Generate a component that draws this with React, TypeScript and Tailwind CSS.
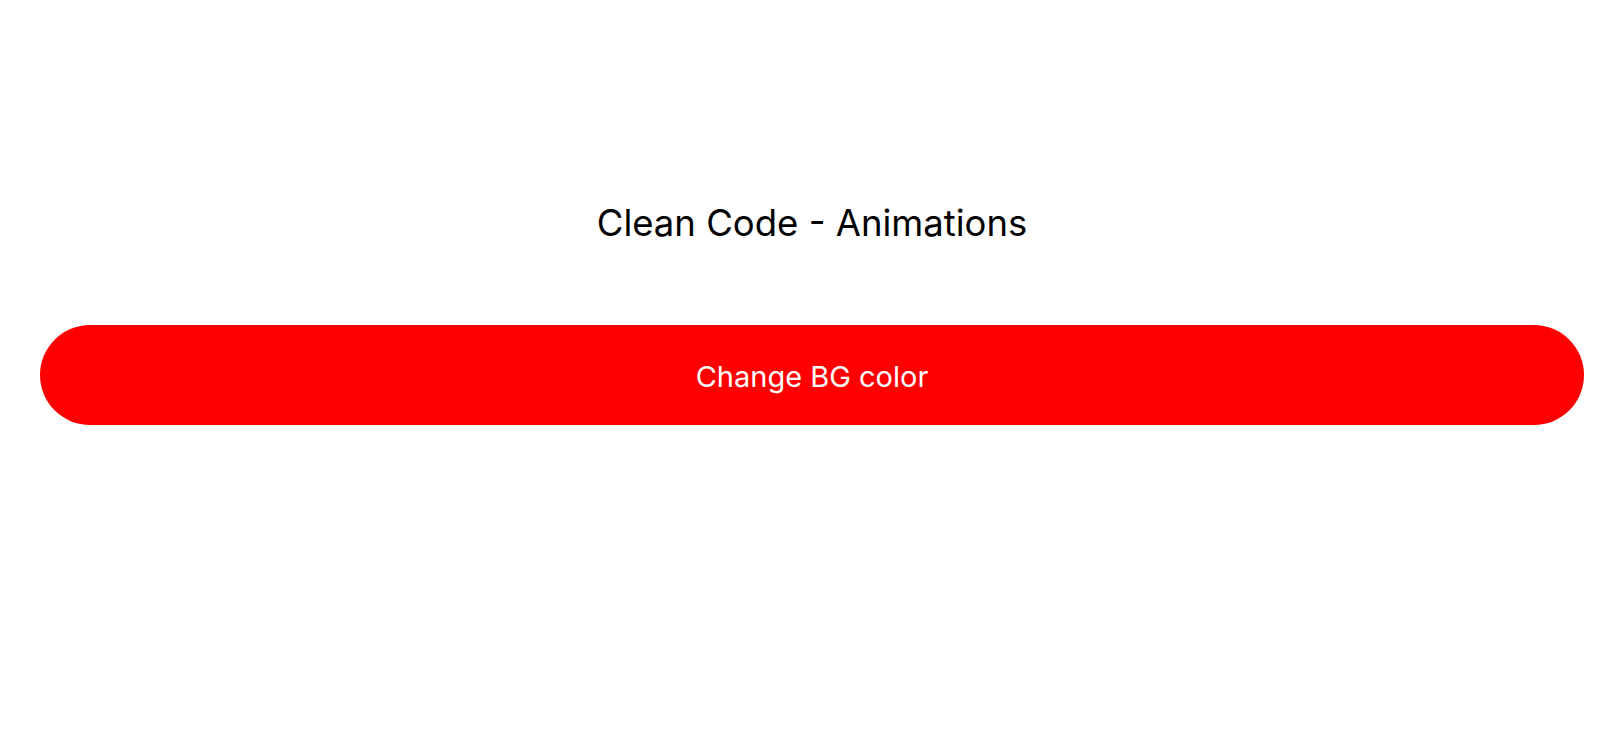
export default function App() {
  return (
    <div
      className="flex min-h-[750px] w-full flex-col bg-white px-10 pt-[201px]"
      style={{ fontFamily: "Inter, 'Noto Sans', sans-serif" }}
    >
      <h1 className="text-center text-[36.5px] leading-[44px] font-normal text-black">
        Clean Code - Animations
      </h1>
      <button
        type="button"
        className="mt-[80px] flex h-[100px] w-full items-center justify-center rounded-[50px] bg-[#ff0000] pt-[2px] text-[29px] leading-none text-white"
      >
        Change BG color
      </button>
    </div>
  );
}
